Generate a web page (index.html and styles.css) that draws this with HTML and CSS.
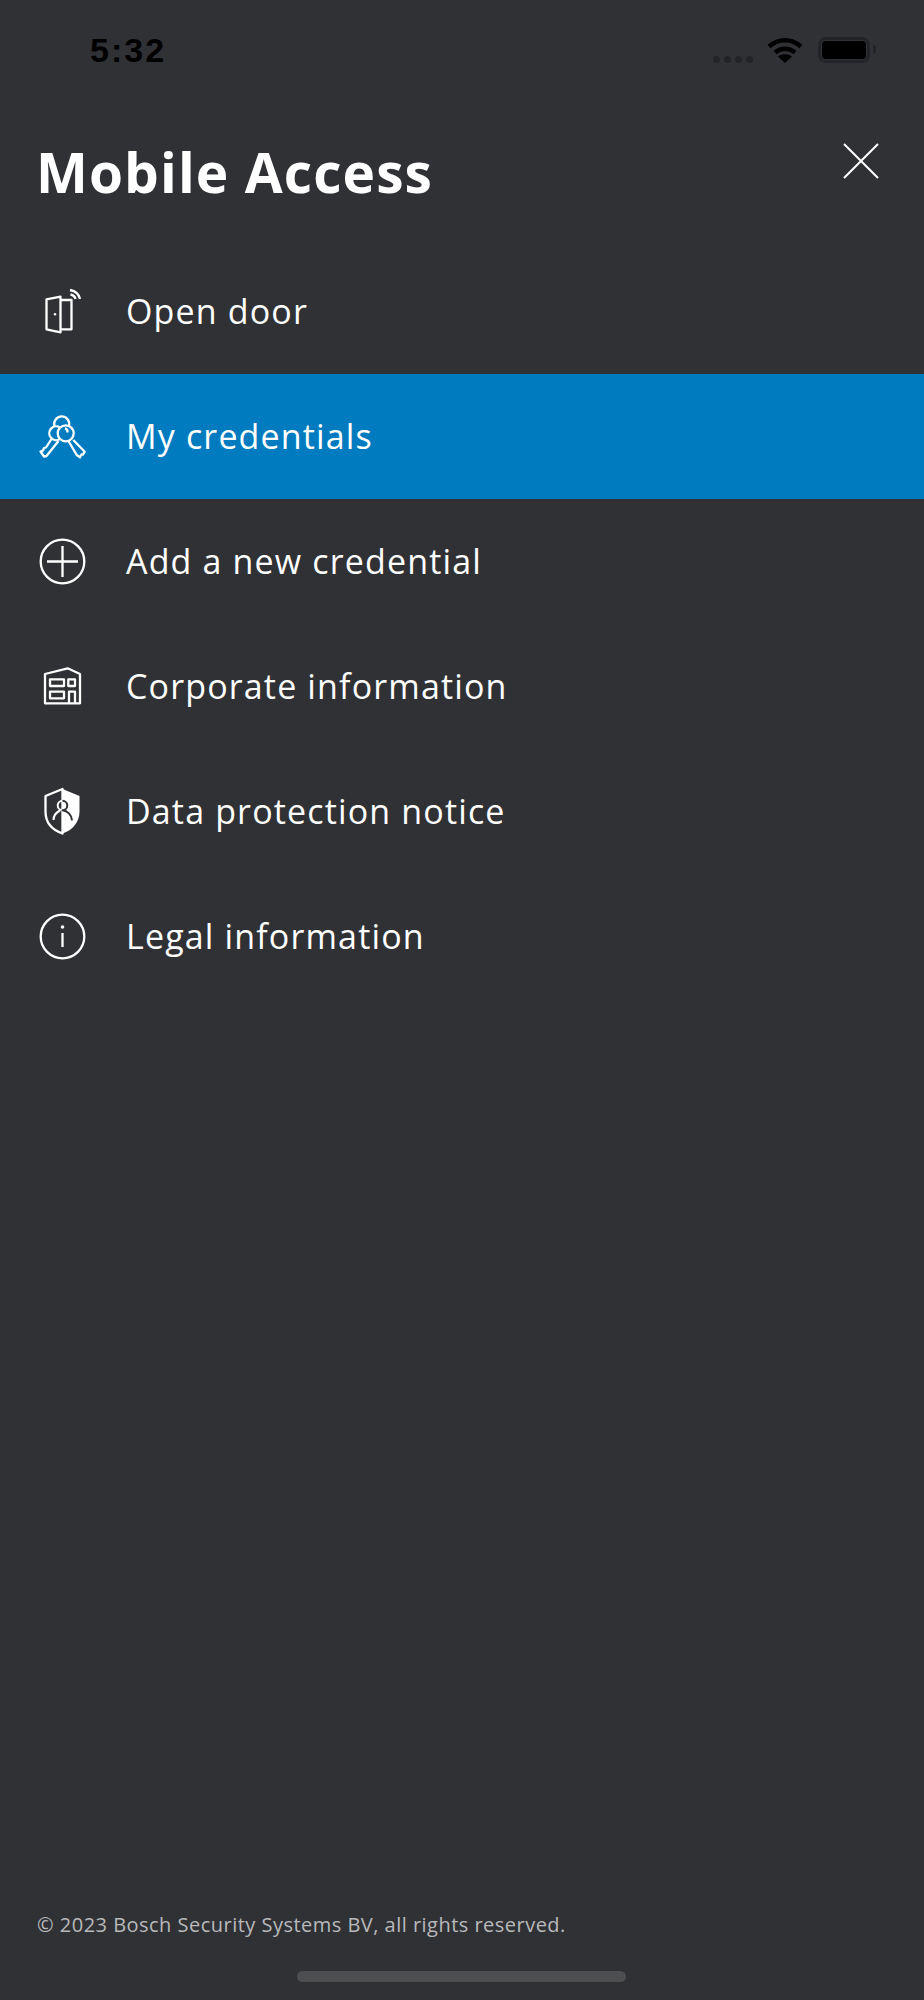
FILE: index.html
```html
<!DOCTYPE html>
<html lang="en">
<head>
<meta charset="utf-8">
<title>Mobile Access</title>
<link rel="stylesheet" href="styles.css">
</head>
<body>
<div class="page">
  <div class="status">
    <span class="time">5:32</span>
    <div class="status-icons">
      <div class="dots"><i></i><i></i><i></i><i></i></div>
      <svg class="wifi" viewBox="0 0 36 26"><path class="wifi-a" d="M2 9.5C11.5 1 24.5 1 34 9.5M8 15.5c6-5 14-5 20 0"/><path class="wifi-b" d="M18 26l-7-6.5c4-3 10-3 14 0z"/></svg>
      <div class="battery"><div class="battery-fill"></div></div>
      <div class="battery-nub"></div>
    </div>
  </div>
  <header class="head">
    <h1 class="title">Mobile Access</h1>
    <svg class="close" viewBox="0 0 36 36"><path d="M1 1l34 34M35 1L1 35"/></svg>
  </header>
  <nav class="menu">
    <a class="row">
      <svg class="ico" viewBox="0 0 49 49"><path d="M8.500 12.300L22.500 9.700v35.600L8.500 42.300zM22.500 13h11v29.300h-11"/><path d="M32 3c5 1 9 4 10 9M32.500 7.500c2.500.5 4.500 2.500 5 4.500"/><circle class="fill" cx="17" cy="27.300" r="1.200"/></svg>
      <span>Open door</span>
    </a>
    <a class="row active">
      <svg class="ico" viewBox="0 0 49 49"><path d="M16.500 14A7.500 7.500 0 1 1 31 13.700"/><path d="M22.100 15.500A6.900 6.900 0 1 0 22.100 26.900"/><circle cx="27.700" cy="21.300" r="8"/><path d="M27 16.500c1.700.3 2.700 2 2.500 4"/><path d="M13.500 27L8 35.500l-2 .5-1 2.500-2.500 1 3.500 5 2.500-.5L20.500 29"/><path d="M30.500 29L38.700 43l3.300 2.300 1.500-3 1.500.2 1.700-2.800L35.300 28"/></svg>
      <span>My credentials</span>
    </a>
    <a class="row">
      <svg class="ico" viewBox="0 0 49 49"><circle cx="24.500" cy="24.500" r="21.800"/><path d="M24.500 9v31M9 24.500h31"/></svg>
      <span>Add a new credential</span>
    </a>
    <a class="row">
      <svg class="ico" viewBox="0 0 49 49"><path d="M7 41.300V12l22.700-5.700L42 12v29.300zM12 17.300h14V24H12zM30.300 17.300H37V24h-6.700zM12 29.700h14v6.600H12zM31 41.300V29.700h6v11.600"/></svg>
      <span>Corporate information</span>
    </a>
    <a class="row">
      <svg class="ico" viewBox="0 0 49 49"><path class="fill" d="M24.500 2l17 7v15.500c0 11-7 18.500-17 22z"/><path d="M24.500 2l-17 7v15.500c0 11 7 18.500 17 22z"/><path class="ink-w" d="M24.500 13.700a4.800 4.800 0 0 0 0 9.600M15.500 33c0-5 3.500-8 6.500-9.500"/><path class="ink-d" d="M24.500 13.700a4.800 4.800 0 0 1 0 9.600c5 .5 9 4.500 9.500 10"/></svg>
      <span>Data protection notice</span>
    </a>
    <a class="row">
      <svg class="ico" viewBox="0 0 49 49"><circle cx="24.500" cy="24.500" r="21.800"/><path d="M24.500 21v14"/><circle class="fill" cx="24.500" cy="15" r="1.800"/></svg>
      <span>Legal information</span>
    </a>
  </nav>
  <footer class="foot">
    <p class="copy">© 2023 Bosch Security Systems BV, all rights reserved.</p>
    <div class="home"></div>
  </footer>
</div>
</body>
</html>
```
FILE: styles.css
```css
* { box-sizing: border-box; }
html, body { margin: 0; padding: 0; }
body { background: #303135; font-family: "Open Sans", "Noto Sans", sans-serif; color: #fff; }
.page { width: 924px; height: 2000px; display: flex; flex-direction: column; background: #303135; overflow: hidden; }

.status { height: 100px; padding: 32px 48px 0 90px; display: flex; justify-content: space-between; align-items: flex-start; }
.time { font-family: "Liberation Sans", sans-serif; font-weight: 700; font-size: 34px; line-height: 36px; letter-spacing: 2px; color: #000; }
.status-icons { display: flex; align-items: flex-start; padding-top: 5px; }
.dots { display: flex; gap: 4px; margin-top: 19px; margin-right: 14px; }
.dots i { width: 7px; height: 7px; border-radius: 50%; background: #232428; }
.wifi { width: 36px; height: 26px; margin-right: 15px; }
.wifi-a { fill: none; stroke: #000; stroke-width: 4.500px; }
.wifi-b { fill: #000; }
.battery { width: 52px; height: 26px; border: 3px solid #232428; border-radius: 8px; padding: 1px; }
.battery-fill { height: 100%; background: #000; border-radius: 4px; }
.battery-nub { width: 3px; height: 9px; margin: 8px 0 0 3px; background: #232428; border-radius: 0 3px 3px 0; }

.head { height: 149px; padding: 0 45px 0 36px; display: flex; justify-content: space-between; align-items: flex-start; }
.title { margin: 36px 0 0; font-size: 55px; line-height: 72px; font-weight: 700; letter-spacing: 1.100px; color: #fff; }
.close { width: 36px; height: 36px; margin-top: 43px; }
.close path { fill: none; stroke: #fff; stroke-width: 2px; }

.menu { display: flex; flex-direction: column; }
.row { height: 125px; display: flex; align-items: center; padding-left: 38px; gap: 39px; font-size: 34px; font-weight: 400; letter-spacing: 1.150px; color: #fff; }
.row span { margin-bottom: 2px; }
.row.active { background: #007bc0; }
.ico { width: 49px; height: 49px; flex: none; }
.ico path, .ico circle { fill: none; stroke: #fff; stroke-width: 2.300px; stroke-linejoin: round; }
.ico .fill { fill: #fff; stroke: none; }
.ico .ink-w { stroke: #fff; stroke-width: 2px; }
.ico .ink-d { stroke: #303135; stroke-width: 2px; }

.foot { margin-top: auto; }
.copy { margin: 0 0 32px 37px; font-size: 20px; line-height: 28px; letter-spacing: .48px; color: #b9b9bb; }
.home { width: 329px; height: 11px; margin: 0 0 18px 297px; border-radius: 6px; background: #4d4e50; }
```
